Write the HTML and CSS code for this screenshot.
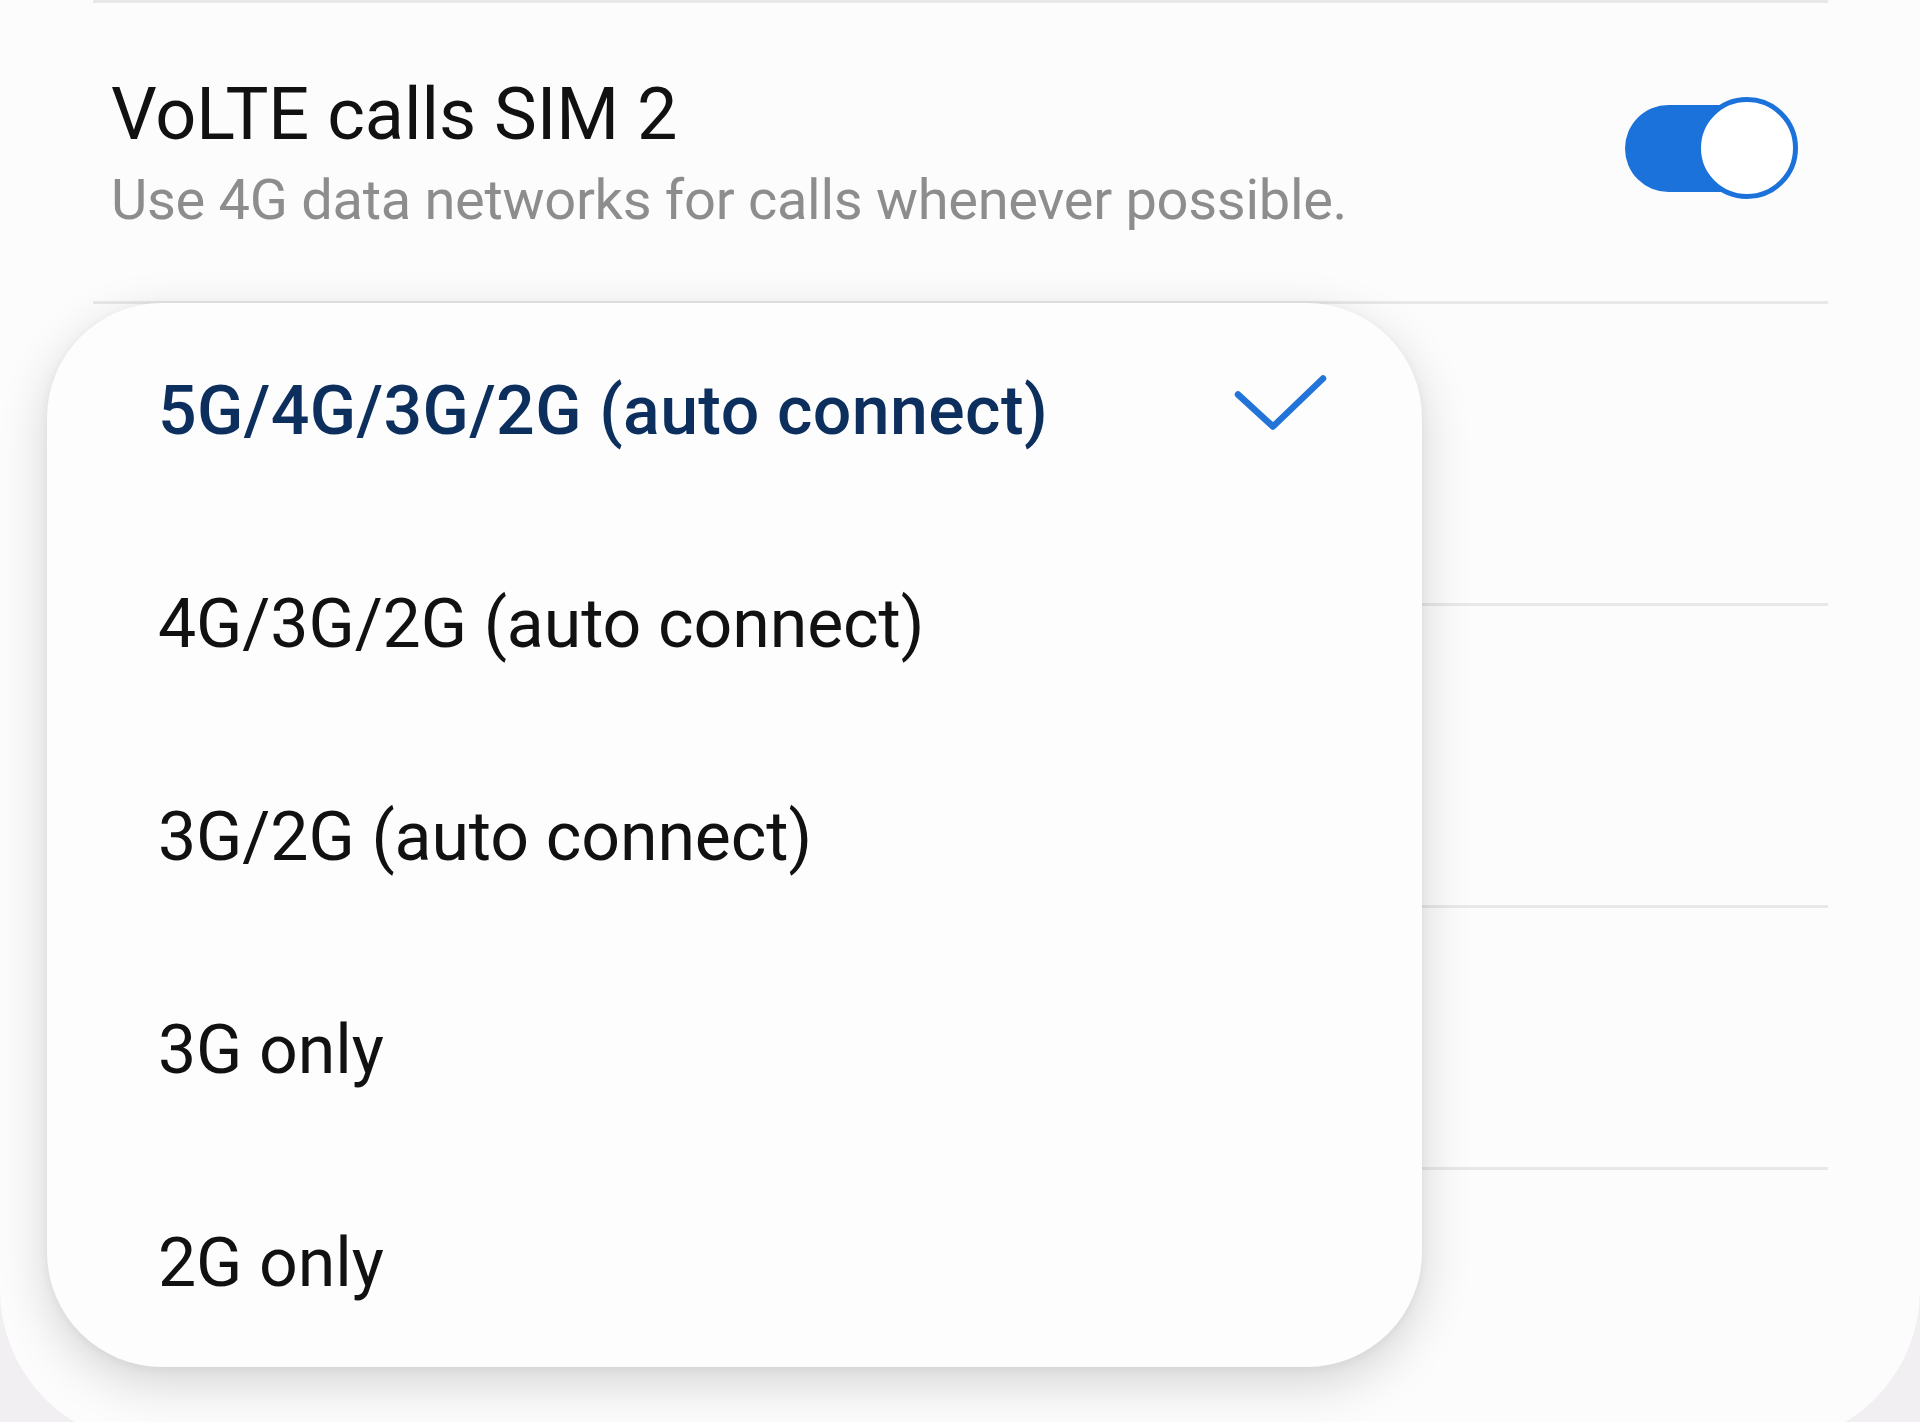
FILE: index.html
```html
<!DOCTYPE html>
<html lang="en">
<head>
    <meta charset="UTF-8">
    <meta name="viewport" content="width=device-width, initial-scale=1.0">
    <title>Network mode</title>
    <link rel="stylesheet" href="styles.css">
</head>
<body>
    <div class="screen">
        <div class="list">
            <div class="divider"></div>
            <div class="setting">
                <div class="setting-text">
                    <div class="setting-title">VoLTE calls SIM 2</div>
                    <div class="setting-sub">Use 4G data networks for calls whenever possible.</div>
                </div>
                <div class="switch on"><span class="thumb"></span></div>
            </div>
            <div class="divider"></div>
            <div class="row row-a"></div>
            <div class="divider"></div>
            <div class="row row-a"></div>
            <div class="divider"></div>
            <div class="row row-b"></div>
            <div class="divider"></div>
        </div>

        <!-- network mode picker -->
        <div class="popup">
            <div class="option selected">
                <span>5G/4G/3G/2G (auto connect)</span>
                <svg class="check" width="96" height="70" viewBox="0 0 96 70">
                    <polyline points="6,22.5 41,54.5 91,6.5" fill="none" stroke="#2374d9" stroke-width="6.5" stroke-linecap="round" stroke-linejoin="round"/>
                </svg>
            </div>
            <div class="option"><span>4G/3G/2G (auto connect)</span></div>
            <div class="option"><span>3G/2G (auto connect)</span></div>
            <div class="option"><span>3G only</span></div>
            <div class="option"><span>2G only</span></div>
        </div>
    </div>
</body>
</html>
```
FILE: styles.css
```css
html, body {
    margin: 0;
    height: 100%;
}
body {
    background: #f2eff2;
    font-family: Roboto, "Noto Sans", Arial, sans-serif;
    overflow: hidden;
}
.screen {
    position: relative;
    width: 1920px;
    height: 1444px;
    background: #fcfcfc;
    border-radius: 0 0 154px 154px;
}
.list {
    padding: 0 92px 0 93px;
}
.divider {
    height: 3px;
    background: #e8e8e8;
}
.setting {
    display: flex;
    align-items: flex-start;
    height: 298px;
    box-sizing: border-box;
    padding: 69px 33px 0 18px;
}
.setting-text {
    flex: 1;
}
.setting-title {
    font-size: 72px;
    line-height: 86px;
    color: #111;
}
.setting-sub {
    margin-top: 2px;
    font-size: 56px;
    line-height: 80px;
    color: #8d8d8d;
    letter-spacing: -0.3px;
}
.switch {
    position: relative;
    width: 170px;
    height: 87px;
    margin-top: 33px;
    border-radius: 44px;
    background: #1b72db;
}
.switch .thumb {
    position: absolute;
    left: 71px;
    top: -8px;
    width: 92px;
    height: 92px;
    border: 5.5px solid #1b72db;
    border-radius: 50%;
    background: #fff;
}
.row-a {
    height: 299px;
}
.row-b {
    height: 259px;
}
.popup {
    position: absolute;
    left: 47px;
    top: 303px;
    width: 1375px;
    height: 1064px;
    display: flex;
    flex-direction: column;
    background: #fdfdfd;
    border-radius: 115px;
    box-shadow: 0 16px 50px rgba(0, 0, 0, 0.16), 0 2px 10px rgba(0, 0, 0, 0.05);
}
.option {
    flex: 1;
    display: flex;
    align-items: center;
    justify-content: space-between;
    padding: 4px 94px 0 111px;
    font-size: 68px;
    color: #111;
    letter-spacing: -0.1px;
}
.option.selected {
    color: #0c2f5e;
    font-weight: 500;
    letter-spacing: 0.4px;
}
.check {
    margin-top: -8px;
}
```
